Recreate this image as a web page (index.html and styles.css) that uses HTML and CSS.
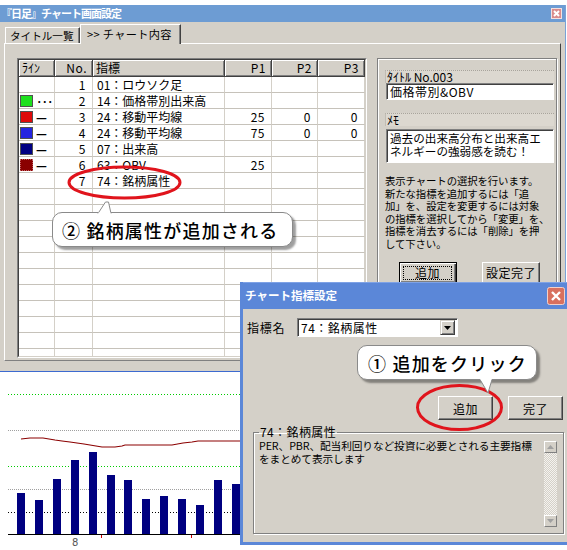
FILE: index.html
```html
<!DOCTYPE html>
<html lang="ja">
<head>
<meta charset="utf-8">
<title>チャート画面設定</title>
<link rel="stylesheet" href="styles.css">
</head>
<body>
<div class="desk">
  <div class="main">
    <div class="titlebar tb-main">
      <span class="ttl">『日足』チャート画面設定</span>
      <svg class="xbtn" width="11" height="11" viewBox="0 0 11 11"><rect x="0.5" y="0.5" width="10" height="10" fill="#d98c8c" stroke="#f4e0e0"/><path d="M3 3L8 8M8 3L3 8" stroke="#fff" stroke-width="2"/></svg>
    </div>
    <div class="tabs">
      <div class="tab">タイトル一覧</div>
      <div class="tab active">&gt;&gt; チャート内容</div>
    </div>
    <div class="panel">
      <div class="list">
        <div class="lv">
          <div class="row head">
            <div class="c">ﾗｲﾝ</div><div class="c r">No.</div><div class="c">指標</div><div class="c r">P1</div><div class="c r">P2</div><div class="c r">P3</div>
          </div>
          <div class="row"><div class="c"></div><div class="c r">1</div><div class="c">01：ロウソク足</div><div class="c r"></div><div class="c r"></div><div class="c r"></div></div>
          <div class="row"><div class="c ln"><i class="sw sw-green"></i><span class="dots">···</span></div><div class="c r">2</div><div class="c">14：価格帯別出来高</div><div class="c r"></div><div class="c r"></div><div class="c r"></div></div>
          <div class="row"><div class="c ln"><i class="sw sw-red"></i><span class="dash">—</span></div><div class="c r">3</div><div class="c">24：移動平均線</div><div class="c r">25</div><div class="c r">0</div><div class="c r">0</div></div>
          <div class="row"><div class="c ln"><i class="sw sw-blue"></i><span class="dash">—</span></div><div class="c r">4</div><div class="c">24：移動平均線</div><div class="c r">75</div><div class="c r">0</div><div class="c r">0</div></div>
          <div class="row"><div class="c ln"><i class="sw sw-navy"></i><span class="dash">—</span></div><div class="c r">5</div><div class="c">07：出来高</div><div class="c r"></div><div class="c r"></div><div class="c r"></div></div>
          <div class="row"><div class="c ln"><i class="sw sw-maroon"></i><span class="dash">—</span></div><div class="c r">6</div><div class="c">63：OBV</div><div class="c r">25</div><div class="c r"></div><div class="c r"></div></div>
          <div class="row"><div class="c"></div><div class="c r">7</div><div class="c">74：銘柄属性</div><div class="c r"></div><div class="c r"></div><div class="c r"></div></div>
          <div class="row"><div class="c"></div><div class="c"></div><div class="c"></div><div class="c"></div><div class="c"></div><div class="c"></div></div>
          <div class="row"><div class="c"></div><div class="c"></div><div class="c"></div><div class="c"></div><div class="c"></div><div class="c"></div></div>
          <div class="row"><div class="c"></div><div class="c"></div><div class="c"></div><div class="c"></div><div class="c"></div><div class="c"></div></div>
          <div class="row"><div class="c"></div><div class="c"></div><div class="c"></div><div class="c"></div><div class="c"></div><div class="c"></div></div>
          <div class="row"><div class="c"></div><div class="c"></div><div class="c"></div><div class="c"></div><div class="c"></div><div class="c"></div></div>
          <div class="row"><div class="c"></div><div class="c"></div><div class="c"></div><div class="c"></div><div class="c"></div><div class="c"></div></div>
          <div class="row"><div class="c"></div><div class="c"></div><div class="c"></div><div class="c"></div><div class="c"></div><div class="c"></div></div>
          <div class="row"><div class="c"></div><div class="c"></div><div class="c"></div><div class="c"></div><div class="c"></div><div class="c"></div></div>
          <div class="row"><div class="c"></div><div class="c"></div><div class="c"></div><div class="c"></div><div class="c"></div><div class="c"></div></div>
          <div class="row"><div class="c"></div><div class="c"></div><div class="c"></div><div class="c"></div><div class="c"></div><div class="c"></div></div>
          <div class="row"><div class="c"></div><div class="c"></div><div class="c"></div><div class="c"></div><div class="c"></div><div class="c"></div></div>
        </div>
      </div>
      <div class="side">
        <div class="lbl">ﾀｲﾄﾙ No.003</div>
        <div class="inp">価格帯別&amp;OBV</div>
        <div class="lbl lbl2">ﾒﾓ</div>
        <div class="memo">
          <div>過去の出来高分布と出来高エ</div>
          <div>ネルギーの強弱感を読む！</div>
        </div>
        <div class="desc">
          <div>表示チャートの選択を行います。</div>
          <div>新たな指標を追加するには「追</div>
          <div>加」を、設定を変更するには対象</div>
          <div>の指標を選択してから「変更」を、</div>
          <div>指標を消去するには「削除」を押</div>
          <div>して下さい。</div>
        </div>
        <div class="btns">
          <div class="btn def"><span class="focus">追加</span></div>
          <div class="btn">設定完了</div>
        </div>
      </div>
    </div>
  </div>

  <div class="chart">
    <svg width="240" height="178" viewBox="0 0 240 178">
      <line x1="8" y1="22.5" x2="240" y2="22.5" stroke="#00cc00" stroke-dasharray="1 2"/>
      <line x1="8" y1="58.5" x2="240" y2="58.5" stroke="#a0a0a0" stroke-dasharray="1 1"/>
      <line x1="8" y1="94.5" x2="240" y2="94.5" stroke="#00cc00" stroke-dasharray="1 2"/>
      <line x1="8" y1="117.5" x2="240" y2="117.5" stroke="#a0a0a0" stroke-dasharray="1 1"/>
      <line x1="8" y1="140.5" x2="240" y2="140.5" stroke="#000" stroke-dasharray="1 2"/>
      <g fill="#000080">
        <rect x="17" y="121" width="8" height="41"/>
        <rect x="35" y="128" width="8" height="34"/>
        <rect x="53" y="107" width="8" height="55"/>
        <rect x="71" y="88" width="8" height="74"/>
        <rect x="89" y="80" width="8" height="82"/>
        <rect x="107" y="103" width="8" height="59"/>
        <rect x="124" y="108" width="8" height="54"/>
        <rect x="142" y="127" width="8" height="35"/>
        <rect x="160" y="124" width="8" height="38"/>
        <rect x="178" y="127" width="8" height="35"/>
        <rect x="196" y="133" width="8" height="29"/>
        <rect x="214" y="108" width="8" height="54"/>
        <rect x="232" y="112" width="8" height="50"/>
      </g>
      <polyline fill="none" stroke="#8b0000" stroke-width="1.2" points="21,67 30,66 43,66 55,68 62,69 70,70 77,71 84,72 90,73 96,74 102,75 115,75 122,74 125,73 172,73 183,71 192,70 198,69 240,69"/>
      <line x1="8" y1="162.5" x2="240" y2="162.5" stroke="#000"/>
      <line x1="101.5" y1="163" x2="101.5" y2="166" stroke="#d00000"/>
      <line x1="191.5" y1="163" x2="191.5" y2="166" stroke="#d00000"/>
      <text x="72" y="174" class="axis">8</text>
    </svg>
  </div>

  <div class="sub">
    <div class="titlebar tb-sub">
      <span class="ttl">チャート指標設定</span>
      <svg class="xbtn" width="18" height="18" viewBox="0 0 18 18"><rect x="0.5" y="0.5" width="17" height="17" rx="2" fill="#d8705f" stroke="#f2d0c8"/><path d="M5 5L13 13M13 5L5 13" stroke="#fff" stroke-width="2.4"/></svg>
    </div>
    <div class="sbody">
      <div class="srow">
        <span class="slbl">指標名</span>
        <div class="combo">
          <span class="ctext">74：銘柄属性</span>
          <span class="dd"><svg width="7" height="4" viewBox="0 0 7 4"><path d="M0 0H7L3.5 4Z" fill="#000"/></svg></span>
        </div>
      </div>
      <div class="sbtns">
        <div class="btn sbtn">追加</div>
        <div class="btn sbtn">完了</div>
      </div>
      <fieldset class="grp">
        <legend>74：銘柄属性</legend>
        <div class="grpin">
          <div class="gtext">
            <div>PER、PBR、配当利回りなど投資に必要とされる主要指標</div>
            <div>をまとめて表示します</div>
          </div>
          <div class="vscroll">
            <span class="sb"><svg width="7" height="4" viewBox="0 0 7 4"><path d="M0 4H7L3.5 0Z" fill="#a0a0a0"/></svg></span>
            <span class="track"></span>
            <span class="sb"><svg width="7" height="4" viewBox="0 0 7 4"><path d="M0 0H7L3.5 4Z" fill="#a0a0a0"/></svg></span>
          </div>
        </div>
      </fieldset>
    </div>
  </div>

  <svg class="ring ring1" width="115" height="35" viewBox="0 0 115 35"><ellipse cx="57.5" cy="17.5" rx="55.5" ry="15.5" fill="none" stroke="#e0141c" stroke-width="3"/></svg>

  <div class="callout c2">
    <svg class="tail tail-up" width="16" height="13" viewBox="0 0 16 13"><path d="M1 12.5L8.5 1L11.5 1L14 12.5" fill="#fff" stroke="#8a8a8a"/><rect x="1.5" y="11.5" width="12" height="2" fill="#fff"/></svg>
    <span>② 銘柄属性が追加される</span>
  </div>

  <svg class="ring ring2" width="89" height="49" viewBox="0 0 89 49"><ellipse cx="44.5" cy="24.5" rx="42" ry="22" fill="none" stroke="#e0141c" stroke-width="3"/></svg>

  <div class="callout c1">
    <svg class="tail tail-down" width="16" height="15" viewBox="0 0 16 15"><path d="M1 0.5L9 14L13 0.5" fill="#fff" stroke="#8a8a8a"/><rect x="1.5" y="-1" width="11" height="2" fill="#fff"/></svg>
    <span>① 追加をクリック</span>
  </div>
</div>
</body>
</html>
```

FILE: styles.css
```css
* { box-sizing: border-box; }
html, body { margin: 0; padding: 0; background: #fff; }
body {
  font-family: "Noto Sans CJK JP", "Liberation Sans", sans-serif;
  font-size: 12px;
  color: #000;
}
.desk {
  position: relative;
  width: 567px;
  height: 550px;
  overflow: hidden;
  background: #fff;
}

/* ---------- main window ---------- */
.main {
  margin-top: 5px;
  width: 566px;
  height: 367px;
  background: #d4d0c8;
  border-bottom: 1px solid #3d6ad0;
  border-right: 1px solid #7aa2d6;
  display: flex;
  flex-direction: column;
}
.titlebar {
  display: flex;
  align-items: center;
  justify-content: space-between;
  color: #fff;
  font-weight: bold;
  flex: none;
}
.tb-main {
  height: 17px;
  background: #6d9cd3;
  padding: 0 3px 0 1px;
  font-size: 11px;
}
.tb-main .ttl { letter-spacing: -1px; }
.ttl { line-height: 1; white-space: nowrap; }
.xbtn { display: block; flex: none; }

.tabs {
  height: 21px;
  flex: none;
  display: flex;
  align-items: flex-end;
  padding-left: 5px;
  position: relative;
  z-index: 1;
}
.tab {
  height: 16px;
  padding: 0 0 0 4px;
  width: 75px;
  border-top: 1px solid #fff;
  border-left: 1px solid #fff;
  border-right: 1px solid #404040;
  box-shadow: inset -1px 0 #808080;
  font-size: 10.6px;
  line-height: 15px;
  white-space: nowrap;
  overflow: hidden;
}
.tab.active {
  height: 20px;
  width: 101px;
  margin-bottom: -1px;
  background: #d4d0c8;
  padding-left: 6px;
  line-height: 18px;
  font-size: 11.2px;
  letter-spacing: 0.3px;
}

.panel {
  margin: 0 4px;
  height: 318px;
  flex: none;
  border-top: 1px solid #fff;
  border-left: 1px solid #fff;
  border-right: 1px solid #404040;
  border-bottom: 1px solid #808080;
  padding: 14px 0 0 12px;
  display: flex;
  gap: 10px;
  align-items: flex-start;
}

/* list view */
.list {
  width: 350px;
  height: 300px;
  flex: none;
  border: 1px solid;
  border-color: #808080 #fff #fff #808080;
}
.lv {
  height: 100%;
  border: 1px solid;
  border-color: #404040 #d4d0c8 #d4d0c8 #404040;
  background: #fff;
  overflow: hidden;
}
.row {
  display: grid;
  grid-template-columns: 36px 38px 132px 47px 46px 47px;
  height: 16px;
}
.c {
  border-right: 1px solid #d4d0c8;
  border-bottom: 1px solid #c6c2ba;
  padding: 0 3px 0 4px;
  line-height: 15px;
  white-space: nowrap;
  overflow: hidden;
  font-size: 12px;
}
.c.r { text-align: right; padding-right: 6px; letter-spacing: 0.5px; }
.head { height: 17px; }
.head .c {
  background: #d4d0c8;
  border-right: 1px solid #404040;
  border-bottom: 1px solid #404040;
  box-shadow: inset 1px 1px #fff, inset -1px -1px #808080;
  line-height: 16px;
  padding-left: 3px;
}
.head .c.r { padding-right: 5px; }
.ln { display: flex; align-items: center; gap: 3px; padding-left: 1px; }
.sw {
  display: block;
  width: 13px;
  height: 12px;
  border: 1px solid #505050;
  flex: none;
}
.sw-green { background: #1ee01e; }
.sw-red { background: #dd0a0a; }
.sw-blue { background: #2424e0; }
.sw-navy { background: #000082; }
.sw-maroon { background: #8a0000; border-style: dotted; border-color: #c06060; }
.dots { font-size: 11px; letter-spacing: -1px; line-height: 12px; font-weight: bold; }
.dash { font-size: 12px; line-height: 12px; font-weight: bold; }

/* side group */
.side {
  width: 180px;
  height: 297px;
  flex: none;
  border: 1px solid #808080;
  box-shadow: inset 1px 1px #fff, 1px 1px #fff;
  padding: 11px 0 0 7px;
  display: flex;
  flex-direction: column;
}
.lbl {
  width: 169px;
  height: 13px;
  border-top: 1px dotted #a8a49c;
  border-left: 1px solid #c0bcb4;
  background: #dcd8d0;
  line-height: 12px;
  font-size: 12px;
  padding-left: 1px;
  white-space: nowrap;
}
.lbl2 { margin-top: 13px; }
.inp {
  width: 168px;
  height: 17px;
  margin-left: 1px;
  background: #fff;
  border: 1px solid;
  border-color: #808080 #fff #fff #808080;
  box-shadow: inset 1px 1px #404040;
  padding-left: 3px;
  line-height: 15px;
  font-size: 12px;
  letter-spacing: 0.5px;
}
.memo {
  margin-top: 3px;
  margin-left: 1px;
  width: 168px;
  height: 34px;
  background: #fff;
  border: 1px solid;
  border-color: #808080 #fff #fff #808080;
  box-shadow: inset 1px 1px #404040;
  padding: 2px 0 0 3px;
  font-size: 11.6px;
  line-height: 13px;
  white-space: nowrap;
}
.memo div, .desc div, .gtext div { height: 1lh; }
.desc {
  margin-top: 12px;
  font-size: 10.4px;
  line-height: 12.6px;
  white-space: nowrap;
  letter-spacing: -0.1px;
}
.btns {
  margin-top: 11px;
  padding-left: 14px;
  display: flex;
  gap: 25px;
}
.btn {
  width: 58px;
  height: 22px;
  flex: none;
  background: #d4d0c8;
  border: 1px solid;
  border-color: #fff #404040 #404040 #fff;
  box-shadow: inset -1px -1px #808080;
  display: flex;
  align-items: center;
  justify-content: center;
  font-size: 12px;
  letter-spacing: 0.5px;
  white-space: nowrap;
}
.btn.def {
  border: 1px solid #000;
  box-shadow: inset 1px 1px #fff, inset -1px -1px #404040, inset -2px -2px #808080;
  padding: 3px 4px 3px 3px;
}
.focus {
  flex: 1;
  align-self: stretch;
  border: 1px dotted #000;
  display: flex;
  align-items: center;
  justify-content: center;
}

/* chart */
.chart { width: 240px; height: 178px; }
.chart svg { display: block; }
.axis { font-family: "DejaVu Sans", sans-serif; font-size: 10px; fill: #555; }

/* ---------- sub window ---------- */
.sub {
  position: absolute;
  left: 240px;
  top: 282px;
  width: 327px;
  height: 263px;
  background: #d4d0c8;
  border-left: 3px solid #5b87d8;
  border-bottom: 3px solid #5b87d8;
  display: flex;
  flex-direction: column;
}
.tb-sub {
  height: 27px;
  background: #5b87d8;
  padding: 0 2px 0 2px;
  font-size: 11.5px;
  border-top: 1px solid #7ea2e6;
}
.sbody {
  flex: 1;
  padding-left: 4px;
  display: flex;
  flex-direction: column;
}
.srow {
  margin-top: 9px;
  height: 19px;
  display: flex;
  align-items: center;
}
.slbl {
  width: 50px;
  font-size: 12px;
  letter-spacing: 0.8px;
}
.combo {
  width: 161px;
  height: 19px;
  background: #fff;
  border: 1px solid;
  border-color: #808080 #fff #fff #808080;
  box-shadow: inset 1px 1px #404040;
  display: flex;
  align-items: center;
  justify-content: space-between;
  padding: 0 2px 0 3px;
}
.ctext { font-size: 12px; letter-spacing: 0.5px; line-height: 15px; }
.dd {
  width: 15px;
  height: 15px;
  background: #d4d0c8;
  border: 1px solid;
  border-color: #d4d0c8 #404040 #404040 #d4d0c8;
  box-shadow: inset 1px 1px #fff, inset -1px -1px #808080;
  display: flex;
  align-items: center;
  justify-content: center;
}
.dd svg, .sb svg { display: block; }
.sbtns {
  margin-top: 59px;
  padding-left: 191px;
  display: flex;
  gap: 15px;
}
.sbtn { width: 55px; height: 24px; }
.grp {
  margin: 5px 0 0 6px;
  width: 311px;
  height: 109px;
  padding: 0 6px 0 5px;
  border: 1px solid #808080;
  box-shadow: inset 1px 1px #fff, 1px 1px #fff;
  min-width: 0;
}
.grp legend {
  padding: 0 1px;
  font-size: 12px;
  line-height: 14px;
  letter-spacing: 0.4px;
}
.grpin {
  display: flex;
  align-items: flex-start;
}
.gtext {
  flex: 1;
  min-width: 0;
  font-size: 10.7px;
  line-height: 13px;
  white-space: nowrap;
  letter-spacing: -0.1px;
}
.vscroll {
  width: 13px;
  height: 86px;
  margin-top: 2px;
  flex: none;
  display: flex;
  flex-direction: column;
}
.sb {
  height: 12px;
  flex: none;
  background: #d4d0c8;
  border: 1px solid;
  border-color: #fff #808080 #808080 #fff;
  display: flex;
  align-items: center;
  justify-content: center;
}
.track {
  flex: 1;
  background: repeating-conic-gradient(#f4f2ee 0 25%, #d4d0c8 0 50%) 0 0 / 2px 2px;
}

/* ---------- overlays ---------- */
.ring { position: absolute; display: block; }
.ring1 { left: 67px; top: 165px; }
.ring2 { left: 415px; top: 383px; }

.callout {
  position: absolute;
  background: #fff;
  border: 1px solid #8a8a8a;
  border-radius: 10px;
  box-shadow: 3px 3px 2px rgba(0, 0, 0, 0.38);
  display: flex;
  align-items: center;
  font-size: 18px;
  font-weight: 500;
  line-height: 1;
  white-space: nowrap;
  letter-spacing: 1.2px;
}
.c2 { left: 52px; top: 212px; width: 241px; height: 35px; padding-left: 9px; }
.c1 { left: 357px; top: 345px; width: 180px; height: 35px; padding-left: 10px; }
.tail { position: absolute; display: block; }
.tail-up { left: 44px; top: -12px; }
.tail-down { left: 121px; top: 33px; }
```
